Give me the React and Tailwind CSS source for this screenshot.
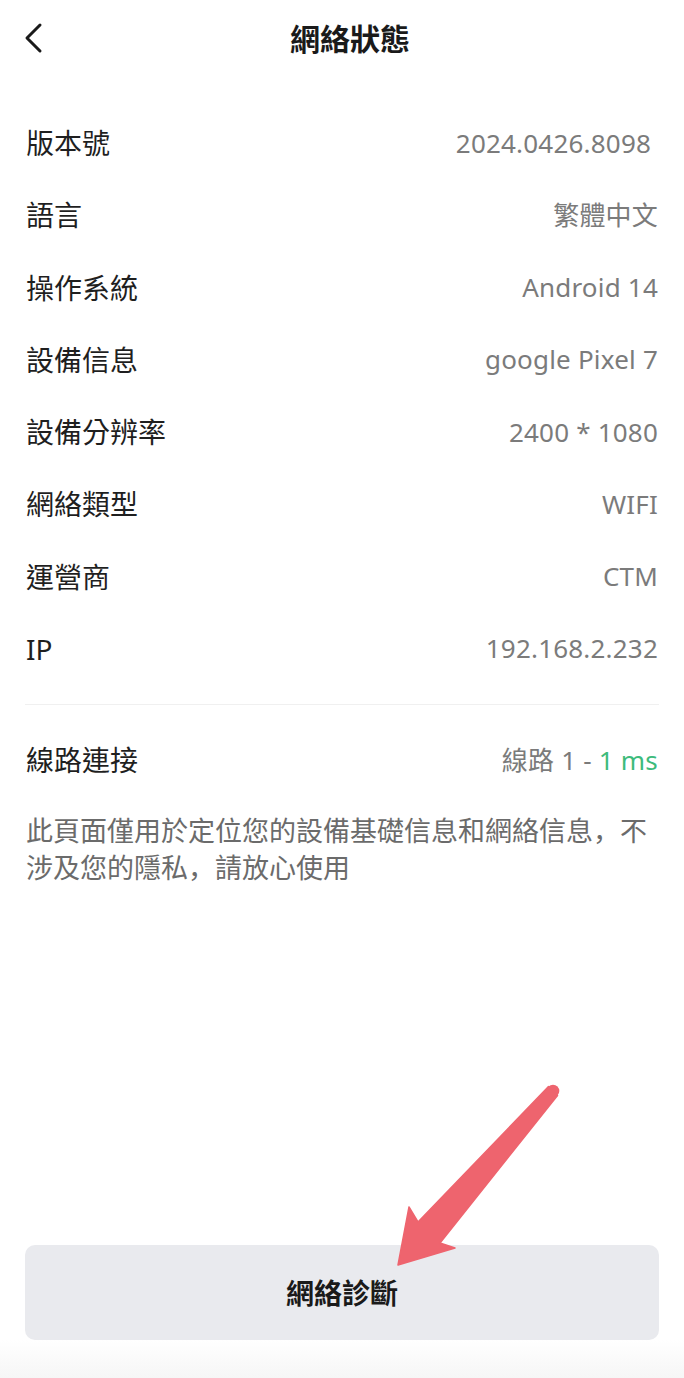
const rows = [
  { label: "版本號", value: "2024.0426.8098 " },
  { label: "語言", value: "繁體中文" },
  { label: "操作系統", value: "Android 14" },
  { label: "設備信息", value: "google Pixel 7" },
  { label: "設備分辨率", value: "2400 * 1080" },
  { label: "網絡類型", value: "WIFI" },
  { label: "運營商", value: "CTM" },
  { label: "IP", value: "192.168.2.232" },
];

const InfoRow = ({ label, children }) => (
  <div className="flex h-[72.25px] items-center justify-between">
    <span className="text-[28px] text-[#1f1f1f]">{label}</span>
    <span className="whitespace-pre text-[26px] tracking-[0.2px] text-[#7b7b7b]">{children}</span>
  </div>
);

// red annotation arrow drawn over the page
const Arrow = () => (
  <svg
    className="pointer-events-none absolute left-0 top-0"
    width="684"
    height="1378"
    viewBox="0 0 684 1378"
  >
    <circle cx="553" cy="1091" r="6.3" fill="#ee646e" />
    <polygon
      points="548.5,1086.5 418,1222 409,1207 398,1265 455,1248 440,1243 557.5,1095.5"
      fill="#ee646e"
      stroke="#ee646e"
      strokeWidth="1.5"
      strokeLinejoin="round"
    />
  </svg>
);

export default function App() {
  return (
    <div
      className="relative flex h-[1378px] w-[684px] flex-col overflow-hidden bg-white"
      style={{ fontFamily: '"Noto Sans", "Noto Sans CJK TC", sans-serif' }}
    >
      {/* header */}
      <div className="flex h-[76px] items-center">
        <button className="flex h-full w-[60px] items-center pl-[24px]">
          <svg width="20" height="32" viewBox="0 0 20 32" fill="none">
            <path
              d="M16 3 L3 16 L16 29"
              stroke="#1a1a1a"
              strokeWidth="3"
              strokeLinecap="round"
              strokeLinejoin="round"
            />
          </svg>
        </button>
        <h1 className="flex-1 text-center text-[30px] font-bold text-[#1a1a1a]">網絡狀態</h1>
        <div className="w-[44px]" />
      </div>

      {/* info list */}
      <div className="px-[26px] pt-[31px]">
        {rows.map((r) => (
          <InfoRow key={r.label} label={r.label}>
            {r.value}
          </InfoRow>
        ))}
      </div>

      <div className="mx-[25px] mt-[19px] h-px bg-[#f0f0f0]" />

      <div className="mt-[19px] px-[26px]">
        <InfoRow label="線路連接">
          線路 1 - <span className="text-[#3dbb7c]">1 ms</span>
        </InfoRow>
        {/* SC face so the full-width comma sits bottom-left like the reference */}
        <p
          className="mt-[15px] text-[27px] leading-[37px] text-[#6b6b6b]"
          style={{ fontFamily: '"Noto Sans CJK SC", sans-serif' }}
        >
          此頁面僅用於定位您的設備基礎信息和網絡信息，不涉及您的隱私，請放心使用
        </p>
      </div>

      {/* bottom action */}
      <div className="mt-auto px-[25px]">
        <button className="flex h-[95px] w-full items-center justify-center rounded-[10px] bg-[#e9eaee] text-[28px] font-bold text-[#1a1a1a]">
          網絡診斷
        </button>
      </div>
      <div className="h-[38px] bg-gradient-to-b from-white to-[#f6f6f6]" />

      <Arrow />
    </div>
  );
}
